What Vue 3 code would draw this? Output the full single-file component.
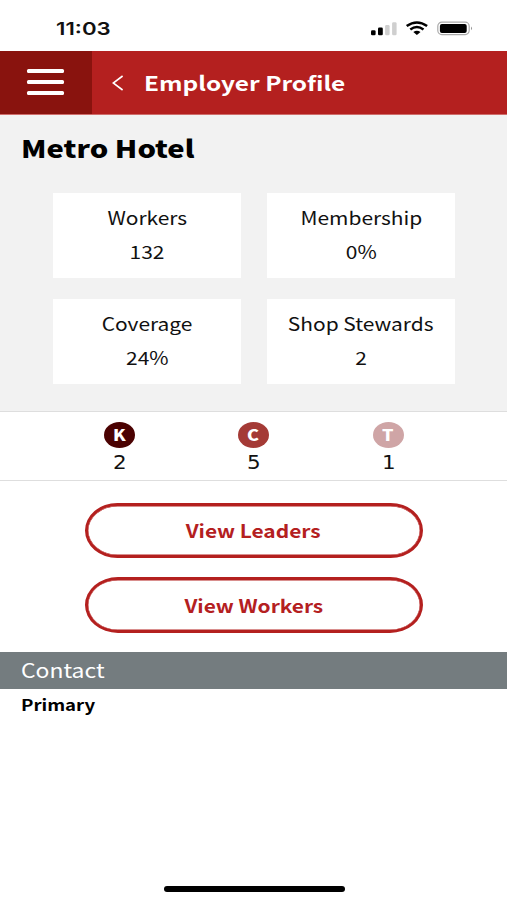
<script setup>
const stats = [
  { label: 'Workers', value: '132' },
  { label: 'Membership', value: '0%' },
  { label: 'Coverage', value: '24%' },
  { label: 'Shop Stewards', value: '2' },
]
const ranks = [
  { letter: 'K', count: 2, tone: 'dark' },
  { letter: 'C', count: 5, tone: 'mid' },
  { letter: 'T', count: 1, tone: 'light' },
]
const actions = ['View Leaders', 'View Workers']
</script>

<template>
  <div class="screen">
    <div class="status">
      <span class="time wide">11:03</span>
      <svg class="status-icons" width="104" height="18" viewBox="0 0 104 18">
        <rect x="1" y="10.3" width="4.6" height="4.9" rx="1.3" />
        <rect x="8" y="7.6" width="4.8" height="7.6" rx="1.3" />
        <rect x="15.1" y="4.9" width="4.5" height="10.3" rx="1.3" fill="#cfcfcf" />
        <rect x="22.1" y="2.2" width="4.5" height="13" rx="1.3" fill="#cfcfcf" />
        <g fill="none" stroke="#000" stroke-width="2.5">
          <path d="M36.7 6.1Q46.9 -1.1 57.1 6.1" />
          <path d="M40.3 9.5Q46.9 4.5 53.5 9.5" />
        </g>
        <path d="M43.3 12.1Q46.9 9.2 50.5 12.1L46.9 15.1Z" />
        <rect x="67.8" y="2.2" width="31.4" height="12.4" rx="4" fill="none" stroke="#aaa" stroke-width="1.2" />
        <rect x="69.9" y="4" width="26.8" height="9" rx="2" />
        <path d="M101 6.5Q103.2 8.4 101 10.3Z" fill="#999" />
      </svg>
    </div>

    <header class="bar">
      <button class="menu" aria-label="Menu">
        <i></i><i></i><i></i>
      </button>
      <svg class="back" width="12" height="16" viewBox="0 0 12 16">
        <path d="M10.6 1L1.2 8L10.6 15" fill="none" stroke="#fff" stroke-width="1.6" />
      </svg>
      <span class="bar-title wide left">Employer Profile</span>
    </header>

    <section class="summary">
      <h1><span class="wide left">Metro Hotel</span></h1>
      <div class="cards">
        <div v-for="s in stats" :key="s.label" class="card">
          <span class="wide">{{ s.label }}</span>
          <span class="wide">{{ s.value }}</span>
        </div>
      </div>
    </section>

    <section class="ranks">
      <div v-for="r in ranks" :key="r.letter" class="rank">
        <div class="badge" :class="r.tone"><span class="wide">{{ r.letter }}</span></div>
        <div class="count">{{ r.count }}</div>
      </div>
    </section>

    <div class="actions">
      <button v-for="a in actions" :key="a" class="action"><span class="wide">{{ a }}</span></button>
    </div>

    <h2><span class="wide left">Contact</span></h2>
    <div class="primary"><span class="wide left">Primary</span></div>
    <div class="home"></div>
  </div>
</template>

<style>
body { margin: 0; background: #fff; }
</style>

<style scoped>
.screen {
  width: 507px;
  height: 900px;
  display: flex;
  flex-direction: column;
  overflow: hidden;
  background: #fff;
  color: #111;
  font-family: "Noto Sans CJK SC", "Noto Sans", sans-serif;
}
.screen * { box-sizing: border-box; }
button { font-family: inherit; padding: 0; margin: 0; }
.wide {
  display: inline-block;
  white-space: nowrap;
  transform: scaleX(1.2);
}
.left { transform-origin: 0 50%; }
.status {
  height: 51px;
  flex: none;
  display: flex;
  justify-content: space-between;
  align-items: center;
  padding: 6px 33px 0 56px;
}
.time {
  font: 600 17.5px/20px Inter, sans-serif;
  transform: scaleX(1.27);
  transform-origin: 0 50%;
}
.status-icons { display: block; }
.bar {
  height: 64px;
  flex: none;
  display: flex;
  align-items: center;
  background: #b4201f;
  color: #fff;
  border-bottom: 1px solid #cf6d6b;
}
.menu {
  width: 92px;
  height: 63px;
  border: 0;
  background: #89130e;
  display: flex;
  flex-direction: column;
  align-items: center;
  justify-content: center;
  gap: 7px;
  padding: 0 2px 1px 0;
}
.menu i { width: 37px; height: 4px; border-radius: 1.5px; background: #fff; }
.back { margin-left: 20px; }
.bar-title {
  margin-left: 20px;
  font-size: 20px;
  line-height: 28px;
  font-weight: 700;
  transform: scaleX(1.22);
}
.summary {
  height: 297px;
  flex: none;
  background: #f2f2f2;
  border-bottom: 1px solid #dedede;
}
h1 {
  margin: 0;
  padding: 15px 0 0 20.5px;
  height: 78px;
  font-size: 24px;
  line-height: 36px;
  font-weight: 900;
  color: #000;
}
h1 .wide { transform: scaleX(1.213); }
.cards {
  display: grid;
  grid-template-columns: 188px 188px;
  grid-auto-rows: 85px;
  gap: 21px 26px;
  padding-left: 53px;
}
.card {
  background: #fff;
  display: flex;
  flex-direction: column;
  align-items: center;
  padding-top: 7px;
  font-size: 18px;
  line-height: 34px;
}
.card .wide { transform: scaleX(1.163); }
.ranks {
  height: 69px;
  flex: none;
  display: flex;
  justify-content: center;
  gap: 103.5px;
  padding-top: 10px;
  border-bottom: 1px solid #dedede;
}
.rank { width: 31px; display: flex; flex-direction: column; align-items: center; }
.badge {
  width: 31px;
  height: 26px;
  border-radius: 50%;
  color: #fff;
  font-size: 15px;
  line-height: 25px;
  font-weight: 900;
  text-align: center;
}
.dark { background: #4b0202; }
.mid { background: #a43a36; }
.light { background: #cfa5a6; }
.count {
  font: 19.5px/28px "DejaVu Sans", sans-serif;
  transform: translate(0.5px, 1px) scaleX(1.1);
}
.actions {
  display: flex;
  flex-direction: column;
  align-items: center;
  gap: 19px;
  padding: 21.5px 0 19px;
}
.action {
  width: 338px;
  height: 55.5px;
  border: 3px solid #b4201f;
  border-radius: 33px / 28px;
  box-shadow: inset 0 0 0 0.4px #b4201f;
  background: #fff;
  color: #b4201f;
  font-size: 18px;
  line-height: 26px;
  font-weight: 700;
}
.action .wide { transform: scaleX(1.16); }
h2 {
  margin: 0;
  height: 37.5px;
  flex: none;
  padding-left: 21px;
  background: #747c7f;
  color: #fff;
  font-size: 19.5px;
  line-height: 35px;
  font-weight: 400;
}
h2 .wide { transform: scaleX(1.175); }
.primary {
  padding-left: 20.5px;
  font-size: 15.5px;
  line-height: 31px;
  font-weight: 700;
  color: #000;
}
.home {
  width: 181px;
  height: 5.5px;
  margin: auto auto 8.5px 163.5px;
  border-radius: 3px;
  background: #000;
}
</style>
